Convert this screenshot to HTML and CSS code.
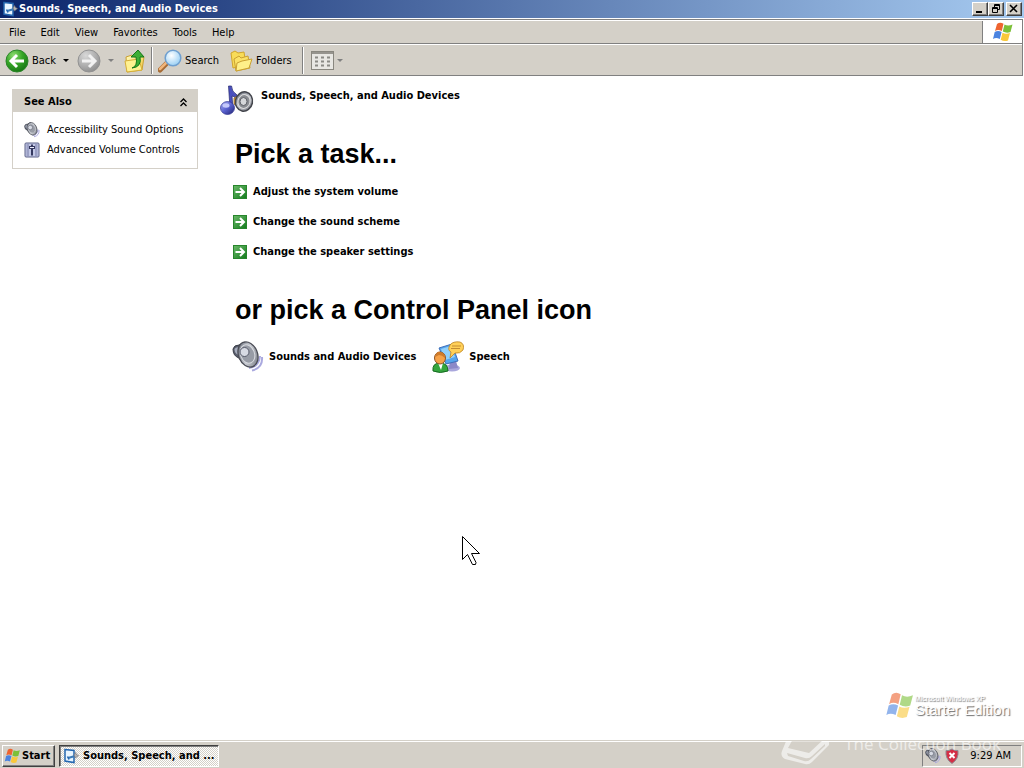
FILE: index.html
```html
<!DOCTYPE html>
<html lang="en">
<head>
<meta charset="utf-8">
<title>Sounds, Speech, and Audio Devices</title>
<link rel="stylesheet" href="styles.css">
</head>
<body>
<svg class="defs" aria-hidden="true">
  <defs>
    <linearGradient id="gBlue" x1="0" y1="0" x2="1" y2="1"><stop offset="0" stop-color="#a9b0f5"/><stop offset=".5" stop-color="#5961cf"/><stop offset="1" stop-color="#20226e"/></linearGradient>
    <linearGradient id="gMetal" x1="0" y1="0" x2="1" y2="1"><stop offset="0" stop-color="#555b68"/><stop offset=".5" stop-color="#c9ccd3"/><stop offset="1" stop-color="#6b6e78"/></linearGradient>
    <linearGradient id="gFolder" x1="0" y1="0" x2="1" y2="1"><stop offset="0" stop-color="#fffbc0"/><stop offset="1" stop-color="#f0c838"/></linearGradient>
    <radialGradient id="gGreen" cx=".35" cy=".25" r=".8"><stop offset="0" stop-color="#8ddc70"/><stop offset=".5" stop-color="#35a526"/><stop offset="1" stop-color="#167414"/></radialGradient>
    <radialGradient id="gGray" cx=".35" cy=".25" r=".8"><stop offset="0" stop-color="#d8d8d8"/><stop offset=".6" stop-color="#adadad"/><stop offset="1" stop-color="#8c8c8c"/></radialGradient>
    <radialGradient id="gLens" cx=".4" cy=".35" r=".7"><stop offset="0" stop-color="#ffffff"/><stop offset="1" stop-color="#94cdf4"/></radialGradient>
    <linearGradient id="gArrow" x1="0" y1="0" x2="1" y2="1"><stop offset="0" stop-color="#6cba6a"/><stop offset="1" stop-color="#127a1c"/></linearGradient>
    <symbol id="flag" viewBox="0 0 22 20">
      <path d="M5 2Q8-.5 11.500 1.800L9.800 9Q6 7 3 9Z" fill="#ee6430"/>
      <path d="M12.500 2.500Q16 4.500 20.500 2.500L18.500 10Q14.500 11.500 10.800 9.500Z" fill="#7cc038"/>
      <path d="M2.700 10Q6 8 9.600 10L7.800 17Q4 15 1 17Z" fill="#4b83e0"/>
      <path d="M10.500 10.800Q14 12.500 18 11L16 18.500Q12 20 8.700 17.800Z" fill="#fac83a"/>
    </symbol>
    <symbol id="panel" viewBox="0 0 16 16">
      <path d="M2 1.500 11 2.500V14.500L2 13Z" fill="#e9f5ff" stroke="#2567b0" stroke-width="1.500"/>
      <path d="M5 10 14 7.500" stroke="#3d7bb8" stroke-width="2.200"/>
      <path d="M4.500 8.500 6 11.500" stroke="#2567b0" stroke-width="1.500"/>
      <path d="M11 7 12.500 4.500 13.500 6.500 15.500 7.500 12.500 10Z" fill="#b9b4b0" stroke="#6c6a70" stroke-width=".6"/>
    </symbol>
    <symbol id="speaker" viewBox="0 0 32 32">
      <path d="M17 27Q27 26 28 15M20 29.500Q31 27 30 16" fill="none" stroke="#aaa9df" stroke-width="2"/>
      <path d="M1 8Q2 4 7 4L13 1 18 25Q10 23 7 17Q1 15 1 8Z" fill="#5a5f6e" stroke="#363a45"/>
      <path d="M2.500 8Q6 4 8 9L7 14Q2.500 13 2.500 8Z" fill="#a7adbd"/>
      <ellipse cx="16" cy="13.500" rx="9.500" ry="13" transform="rotate(-22 16 13.500)" fill="url(#gMetal)" stroke="#4b4d56" stroke-width="1.300"/>
      <ellipse cx="15.500" cy="13" rx="7" ry="9.500" transform="rotate(-22 15.500 13)" fill="#989ca6" stroke="#d9dbe0"/>
      <circle cx="12.500" cy="11" r="4.500" fill="#d7dae3" stroke="#565a69"/>
    </symbol>
    <symbol id="note" viewBox="0 0 34 32">
      <path d="M8.500 1 11.500 1Q12 7 16 9Q20 12 18 18Q17 12 12 11L13 23H10Z" fill="#4a50bd" stroke="#25286f" stroke-width=".7"/>
      <ellipse cx="7.500" cy="23" rx="7" ry="6.500" fill="url(#gBlue)" stroke="#2c3090" stroke-width=".7"/>
      <ellipse cx="6" cy="20.500" rx="3.500" ry="2.200" fill="#c5c9fb"/>
      <path d="M14 13 20 9V24L14 19Z" fill="#e4a43c" stroke="#78551f" stroke-width=".7"/>
      <ellipse cx="24" cy="16.500" rx="8.500" ry="9.700" transform="rotate(12 24 16.500)" fill="url(#gMetal)" stroke="#44464d" stroke-width="1.500"/>
      <ellipse cx="24" cy="16.500" rx="6" ry="7" transform="rotate(12 24 16.500)" fill="#898c92" stroke="#ddd"/>
      <ellipse cx="23.500" cy="16.500" rx="3.500" ry="4" fill="#d5d7da" stroke="#5d6066"/>
    </symbol>
    <symbol id="mixer" viewBox="0 0 16 16">
      <rect x="1" y="1" width="14" height="14" rx="1" fill="#c3c8e6" stroke="#5d6288"/>
      <path d="M2.500 3H5M2.500 5H5M2.500 7H5M2.500 9H5M2.500 11H5M2.500 13H5M11 3H13.500M11 5H13.500M11 7H13.500M11 9H13.500M11 11H13.500M11 13H13.500" stroke="#7379a4"/>
      <path d="M8 2.500V13.500" stroke="#34385f" stroke-width="2"/><rect x="5.500" y="4.500" width="5" height="2" fill="#eef0ff" stroke="#34385f"/>
    </symbol>
    <symbol id="go" viewBox="0 0 14 14">
      <rect x=".5" y=".5" width="13" height="13" fill="url(#gArrow)" stroke="#27862c"/>
      <path d="M2.500 7H11M7 3 11 7 7 11" fill="none" stroke="#fff" stroke-width="2"/>
    </symbol>
    <symbol id="speech" viewBox="0 0 32 32">
      <ellipse cx="20" cy="27" rx="8" ry="3.500" fill="#a9a7dc"/>
      <path d="M18 19 24 20 26 27 17 28Z" fill="#8b88c8"/>
      <path d="M7 7 20 3 26 20 14 23Z" fill="#55a5ed" stroke="#3f6fba"/>
      <path d="M9 8 19 5 23 16 13 19Z" fill="#91d0fb"/>
      <path d="M18 4Q21 0 28 1Q33 3 31 9Q28 13 23 12L18 17 19 11Q15 9 18 4Z" fill="#ffd058" stroke="#bd8424" stroke-width=".8"/>
      <path d="M20 5H29M19 7.500H28" stroke="#c48d32"/>
      <path d="M1 30Q0 22 8 22Q16 22 16 30Q8 33 1 30Z" fill="#35a63e" stroke="#176c22"/>
      <path d="M6 22H11L9 29Z" fill="#fff"/>
      <ellipse cx="8" cy="17" rx="5.500" ry="6" fill="#f6a249" stroke="#8d5426"/>
      <path d="M3 16Q4 10 9 11Q14 13 13 17Q10 14 7 14Z" fill="#cf7b2b"/>
    </symbol>
  </defs>
</svg>

<div class="desktop">
  <header class="titlebar">
    <svg class="i16"><use href="#panel"/></svg>
    <h1 class="title">Sounds, Speech, and Audio Devices</h1>
    <div class="controls">
      <button class="ctl" aria-label="Minimize"><svg width="12" height="10"><path d="M2 8H8" stroke="#000" stroke-width="2"/></svg></button>
      <button class="ctl" aria-label="Restore"><svg width="12" height="10" fill="none" stroke="#000"><path d="M4.500 3V.5H9.500V5.500H8M4 1.500H10M2.500 3.500H7.500V8.500H2.500ZM2 4.500H8"/></svg></button>
      <button class="ctl close" aria-label="Close"><svg width="12" height="10"><path d="M2 1 9 8M9 1 2 8" stroke="#000" stroke-width="1.600"/></svg></button>
    </div>
  </header>

  <div class="bars">
    <nav class="menubar" aria-label="Menu">
      <button>File</button><button>Edit</button><button>View</button><button>Favorites</button><button>Tools</button><button>Help</button>
      <span class="brand"><svg width="22" height="20"><use href="#flag"/></svg></span>
    </nav>
    <div class="toolbar" role="toolbar">
      <button class="tool"><svg width="24" height="24" viewBox="0 0 24 24"><circle cx="12" cy="12" r="11" fill="url(#gGreen)" stroke="#2c852a"/><path d="M19 12H7M12 6 6 12 12 18" fill="none" stroke="#fff" stroke-width="3"/></svg>Back<i class="caret"></i></button>
      <button class="tool forward" aria-label="Forward"><svg width="24" height="24" viewBox="0 0 24 24"><circle cx="12" cy="12" r="11" fill="url(#gGray)" stroke="#929292"/><path d="M5 12H17M12 6 18 12 12 18" fill="none" stroke="#f2f2f2" stroke-width="3"/></svg><i class="caret dim"></i></button>
      <button class="tool" aria-label="Up"><svg width="22" height="24" viewBox="0 0 22 24"><path d="M2 8 8 6 10 8 18 6 20 8 18 21 3 23Z" fill="url(#gFolder)" stroke="#caa032"/><path d="M1 12 15 10 18 21 3 23Z" fill="#fff191" stroke="#d6af38"/><path d="M8 19Q14 17 12 8H7L14 1 20 8H16Q18 18 8 19Z" fill="#3cae35" stroke="#157719"/></svg></button>
      <span class="sep"></span>
      <button class="tool"><svg width="24" height="24" viewBox="0 0 24 24"><path d="M2 21 9 14" stroke="#a66b35" stroke-width="5" stroke-linecap="round"/><path d="M2 20 9 13" stroke="#f0b57b" stroke-width="2.500" stroke-linecap="round"/><circle cx="15" cy="9" r="7.800" fill="url(#gLens)" stroke="#6f9fcf" stroke-width="1.500"/></svg>Search</button>
      <button class="tool folders"><svg width="23" height="22" viewBox="0 0 23 22"><path d="M1 3 5 1 8 3 14 2 16 15 3 18Z" fill="#f8dc58" stroke="#d0a52c"/><path d="M4 9 9 6 11 8 18 6 20 18 6 21Z" fill="#fbe267" stroke="#caa032"/><path d="M7 13 12 11 22 9 19 18 6 21Z" fill="#fff08a" stroke="#caa032"/></svg>Folders</button>
      <span class="sep"></span>
      <button class="tool views" aria-label="Views"><svg width="23" height="19" viewBox="0 0 23 19"><rect x=".5" y=".5" width="22" height="18" fill="#e8e7e3" stroke="#89877f"/><path d="M1 2H22" stroke="#96948e" stroke-width="2"/><path d="M4 6.500H7M10 6.500H13M16 6.500H19M4 10.500H7M10 10.500H13M16 10.500H19M4 14.500H7M10 14.500H13M16 14.500H19" stroke="#8a8a85" stroke-width="2"/></svg><i class="caret dim"></i></button>
    </div>
  </div>

  <div class="content">
    <aside class="side">
      <section class="panel">
        <h2 class="panel-head">See Also<button aria-label="Collapse"><svg width="9" height="9" fill="none" stroke="#000" stroke-width="1.300"><path d="M1.500 4 4.500 1 7.500 4M1.500 8 4.500 5 7.500 8"/></svg></button></h2>
        <ul class="links">
          <li><a href="#"><svg class="i16"><use href="#speaker"/></svg>Accessibility Sound Options</a></li>
          <li><a href="#"><svg class="i16"><use href="#mixer"/></svg>Advanced Volume Controls</a></li>
        </ul>
      </section>
    </aside>
    <main class="main">
      <div class="category"><svg width="34" height="32"><use href="#note"/></svg><span>Sounds, Speech, and Audio Devices</span></div>
      <h2 class="heading">Pick a task...</h2>
      <ul class="tasks">
        <li><a href="#"><svg width="14" height="14"><use href="#go"/></svg>Adjust the system volume</a></li>
        <li><a href="#"><svg width="14" height="14"><use href="#go"/></svg>Change the sound scheme</a></li>
        <li><a href="#"><svg width="14" height="14"><use href="#go"/></svg>Change the speaker settings</a></li>
      </ul>
      <h2 class="heading second">or pick a Control Panel icon</h2>
      <div class="icons">
        <a href="#"><svg width="32" height="32"><use href="#speaker"/></svg>Sounds and Audio Devices</a>
        <a href="#"><svg width="32" height="32"><use href="#speech"/></svg>Speech</a>
      </div>
    </main>
    <div class="edition">
      <svg width="30" height="29"><use href="#flag"/></svg>
      <div><div class="ed-small">Microsoft Windows XP</div><div class="ed-big">Starter Edition</div></div>
    </div>
  </div>

  <footer class="taskbar">
    <button class="start"><svg width="17" height="16"><use href="#flag"/></svg>Start</button>
    <button class="task"><svg class="i16"><use href="#panel"/></svg><span>Sounds, Speech, and ...</span></button>
    <div class="tray">
      <svg class="i16"><use href="#speaker"/></svg>
      <svg class="i16" viewBox="0 0 16 16"><path d="M8 1Q11 3 14 2.500Q15 11 8 15.500Q1 11 2 2.500Q5 3 8 1Z" fill="#d42e45" stroke="#8e8c93"/><path d="M5.500 5 10.500 10M10.500 5 5.500 10" stroke="#fff" stroke-width="2"/></svg>
      <time>9:29 AM</time>
    </div>
    <div class="mark">
      <svg width="52" height="26" viewBox="0 0 52 26"><path d="M6 0H48V6L31 23Q28 26 24 25L4 20Q-1 17 1 12Z" fill="#fff"/><path d="M12 0H43L28 14 7 9Z" fill="#d4d0c8"/><path d="M6 14 24 19Q28 20 31 17L44 5V7L30 20Q27 23 23 22L7 17Z" fill="#d4d0c8"/></svg>
      <span>The Collection Book</span>
    </div>
  </footer>
  <svg class="cursor" width="20" height="32" viewBox="0 0 20 32"><path d="M1.500 1.500V24.500L6.500 19.500 11.500 29.500H14.500L15 27.500 10.500 18.500H18.500Z" fill="#fff" stroke="#000"/></svg>
</div>
</body>
</html>
```
FILE: styles.css
```css
* { box-sizing: border-box; }
body {
  margin: 0;
  font: 11px/14px "DejaVu Sans Condensed", "DejaVu Sans", sans-serif;
  color: #000;
  background: #fff;
}
button { font: inherit; color: inherit; background: none; border: 0; padding: 0; }
a { color: inherit; text-decoration: none; }
ul { list-style: none; margin: 0; padding: 0; }
h1, h2 { margin: 0; font-size: 11px; }
svg { display: block; flex: none; }
.defs { position: absolute; width: 0; height: 0; }
.i16 { width: 16px; height: 16px; }

.desktop { position: relative; min-height: 100vh; display: flex; flex-direction: column; overflow: hidden; }

.titlebar {
  display: flex; align-items: center; gap: 1px;
  height: 18px; padding: 0 2px;
  background: linear-gradient(90deg, #0a246a, #a6caf0);
  color: #fff;
}
.title { flex: 1; }
.controls { display: flex; }
.ctl {
  width: 16px; height: 14px; padding: 1px;
  background: #d4d0c8;
  border: 1px solid; border-color: #fff #404040 #404040 #fff;
  box-shadow: inset -1px -1px #808080;
}
.close { margin-left: 2px; }

.bars { background: #d4d0c8; border: 1px solid #808080; border-width: 1px 1px 1px 0; margin: 1px 1px 0 0; }
.menubar { display: flex; align-items: center; height: 24px; border-bottom: 1px solid #808080; border-top: 1px solid #fff; padding-left: 9px; gap: 15px; }
.menubar button { padding-top: 1px; }
.brand { align-self: stretch; display: flex; align-items: center; justify-content: center; width: 40px; margin-left: auto; background: #fff; border-left: 1px solid #808080; }
.toolbar { display: flex; align-items: center; height: 31px; border-top: 1px solid #fff; padding: 1px 0 0 5px; }
.tool { display: flex; align-items: center; gap: 3px; }
.caret { border: 3px solid transparent; border-top-color: #000; border-bottom: 0; margin-left: 4px; }
.caret.dim { border-top-color: #808080; }
.forward { margin-left: 8px; }
.forward + .tool { margin-left: 10px; }
.sep { width: 2px; height: 27px; margin: 0 5px; border-left: 1px solid #808080; border-right: 1px solid #fff; }
.folders { margin-left: 11px; gap: 3px; }
.folders + .sep { margin: 0 7px 0 10px; }
.views .caret { margin-left: 0; }

.content { position: relative; flex: 1; display: flex; padding: 13px 12px 0; gap: 22px; }
.side { flex: 0 0 186px; }
.panel { border: 1px solid #d4d0c8; }
.panel-head { display: flex; align-items: center; justify-content: space-between; height: 22px; padding: 2px 9px 0 11px; background: #d4d0c8; }
.links { display: grid; gap: 4px; padding: 10px 11px; }
.links a { display: flex; align-items: center; gap: 7px; white-space: nowrap; }

.main { flex: 1; font-weight: bold; }
.category { display: flex; gap: 7px; height: 28px; }
.category svg { margin-top: -4px; }
.heading { font: bold 27px/32px "Liberation Sans", sans-serif; padding-left: 15px; margin-top: 21px; }
.tasks { display: grid; gap: 16px; padding: 15px 0 0 13px; }
.tasks a { display: flex; align-items: center; gap: 6px; }
.second { margin-top: 35px; }
.icons { display: flex; gap: 16px; padding: 15px 0 0 12px; }
.icons a { display: flex; align-items: center; gap: 5px; }

.edition { position: absolute; right: 14px; bottom: 20px; display: flex; align-items: center; color: #fff; font-family: "Liberation Sans", sans-serif; text-shadow: 1px 1px 1px #666; }
.edition svg { opacity: .6; }
.ed-small { font-size: 7px; line-height: 8px; }
.ed-big { font-size: 15px; line-height: 14px; }

.taskbar { position: relative; display: flex; align-items: center; gap: 4px; height: 28px; padding: 3px 2px 1px; background: #d4d0c8; border-top: 1px solid #d4d0c8; box-shadow: inset 0 1px #fff; overflow: hidden; }
.start, .task { display: flex; align-items: center; height: 22px; font-weight: bold; border: 1px solid; }
.start { width: 53px; padding-left: 1px; gap: 1px; border-color: #fff #404040 #404040 #fff; box-shadow: inset -1px -1px #808080; }
.task { width: 160px; padding-left: 3px; gap: 4px; border-color: #404040 #fff #fff #404040; box-shadow: inset 1px 1px #808080; background: repeating-conic-gradient(#fff 0 25%, #d4d0c8 0 50%) 0 0 / 2px 2px; }
.tray { display: flex; align-items: center; gap: 3px; height: 22px; margin-left: auto; padding: 0 10px 0 2px; border: 1px solid; border-color: #808080 #fff #fff #808080; }
.tray time { margin-left: 7px; }
.mark { position: absolute; right: 23px; top: -2px; display: flex; gap: 11px; color: #fff; font: 17px/10px "Open Sans", sans-serif; opacity: .6; pointer-events: none; }
.cursor { position: absolute; left: 461px; top: 535px; }
```
